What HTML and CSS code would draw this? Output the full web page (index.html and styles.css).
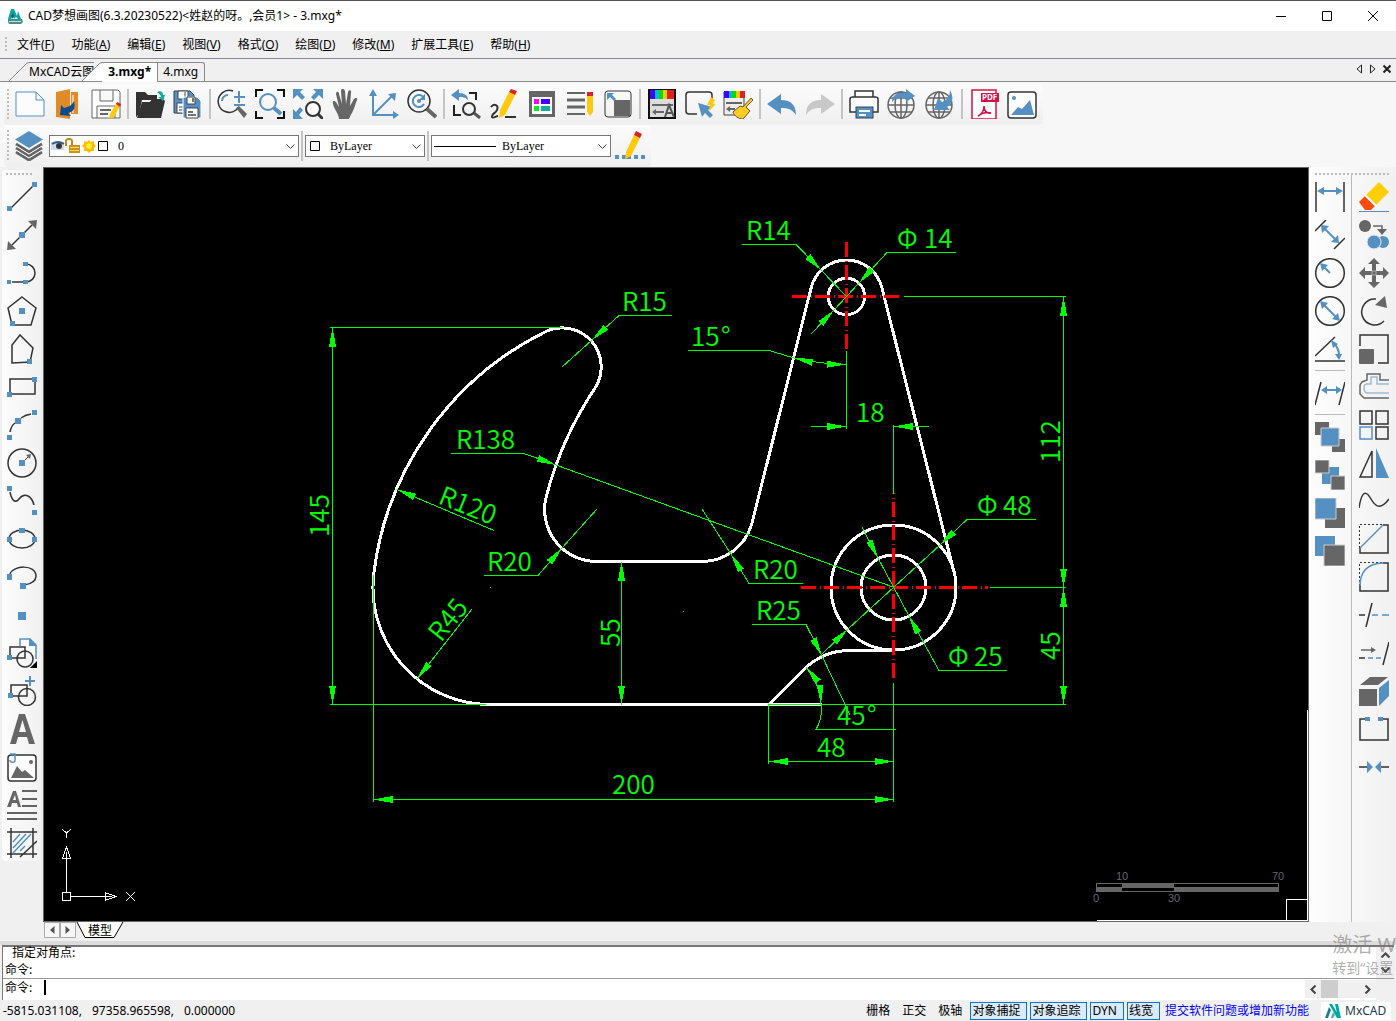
FILE: index.html
```html
<!DOCTYPE html>
<html lang="zh-CN">
<head>
<meta charset="utf-8">
<title>CAD梦想画图</title>
<link rel="stylesheet" href="styles.css">
</head>
<body>
<header class="titlebar">
  <svg class="app-icon" viewBox="0 0 16 16"><path fill="#4a8c8a" d="M1 11h14l1 3-2 2H2l-1-2z"/><path fill="#c9e2e0" d="M2 13h12v1H2z"/><path fill="#00a99d" d="M4 1h3l3 7 1-5 3 8h-3l-2-2-2 2-2-4-1 4H1z"/><path fill="#24566b" d="M4 8l2-3 1 3-2 3z"/></svg>
  <h1 class="title">CAD梦想画图(6.3.20230522)&lt;姓赵的呀。,会员1&gt; - 3.mxg*</h1>
  <div class="win-controls">
    <button aria-label="最小化"><svg viewBox="0 0 10 10"><path d="M0 5.5h10"/></svg></button>
    <button aria-label="最大化"><svg viewBox="0 0 10 10"><path d="M.5.5h9v9h-9z"/></svg></button>
    <button aria-label="关闭"><svg viewBox="0 0 10 10"><path d="M0 0l10 10M10 0L0 10"/></svg></button>
  </div>
</header>
<nav class="menubar">
  <i class="grip"></i>
  <button>文件(<u>F</u>)</button><button>功能(<u>A</u>)</button><button>编辑(<u>E</u>)</button><button>视图(<u>V</u>)</button><button>格式(<u>O</u>)</button><button>绘图(<u>D</u>)</button><button>修改(<u>M</u>)</button><button>扩展工具(<u>E</u>)</button><button>帮助(<u>H</u>)</button>
</nav>
<div class="doctabs">
  <button class="tab first"><svg viewBox="0 0 20 19"><path d="M0 19L16 3Q18 .5 20 .5"/></svg><span>MxCAD云图</span></button>
  <button class="tab active"><svg viewBox="0 0 20 19"><path d="M0 19L16 3Q18 .5 20 .5V19z"/></svg><span>3.mxg*</span></button>
  <button class="tab plain"><span>4.mxg</span></button>
  <div class="tab-nav">
    <button aria-label="向左"><svg viewBox="0 0 8 10"><path d="M6.500 1v8L2 5z"/></svg></button>
    <button aria-label="向右"><svg viewBox="0 0 8 10"><path d="M1.500 1v8L6 5z"/></svg></button>
    <button aria-label="关闭标签"><svg viewBox="0 0 8 10"><path class="x" d="M.5 1.500l7 7M7.500 1.500l-7 7"/></svg></button>
  </div>
</div>
<div class="bands">
  <div class="toolbar main-tools">
    <i class="grip"></i>
    <button class="tool" aria-label="新建"><svg viewBox="0 0 30 30"><path class="sb wf" d="M1 3h20l8 8v16H1zM21 3v8h8"/></svg></button>
    <button class="tool" aria-label="打开"><svg viewBox="0 0 30 30"><path fill="#e08a28" d="M3 3L17 0v30L3 28zM18 3h7v22h-7z"/><path fill="#f7c88c" d="M19 6h2v18h-2z"/><path fill="#0b4a8e" d="M7 26l1-10 3 3c5-1 8-3 10-7 2 8-1 11-6 12l3 3z"/></svg></button>
    <button class="tool" aria-label="保存"><svg viewBox="0 0 30 30"><path class="sg wf" d="M1 1h26l2 2v26H1zM9 1v11h13V1M6 29V17h18v12"/><path class="sg" stroke-width="2" d="M9 21h11M9 25h8"/><path fill="#ffc90e" d="M25 15l4 2-6 11-5 2 1-5z"/><path fill="#d22" d="M25 15l1-2 4 2-1 3z"/></svg></button>
    <i class="sep"></i>
    <button class="tool" aria-label="打开文件"><svg viewBox="0 0 30 30"><path fill="#333" d="M1 3h9l3 3h9v5H7L4 25l-3 3z"/><path fill="#333" d="M7 13h8l2-3h11l2 2-4 17H2z"/><path fill="#1aa89a" d="M22 3c4-2 6 0 6 3h2l-2 6-5-4h3c0-2-2-3-4-5z"/></svg></button>
    <button class="tool" aria-label="全部保存"><svg viewBox="0 0 30 30"><path fill="#5590c3" stroke="#345" d="M1 2h16l4 4v18H1z"/><path fill="#fff" stroke="#444" d="M5 2h10v8H5zM4 14h10v10H4z"/><path stroke="#444" d="M6 18h6M6 21h6M12 3v5"/><path fill="#5590c3" stroke="#fff" d="M10 8h14l4 4v17H10z"/><path fill="#fff" stroke="#444" d="M14 8h8v7h-8zM13 19h12v10H13z"/><path stroke="#444" stroke-width="1.500" d="M15 23h5M15 26h8M20 9v4"/></svg></button>
    <i class="sep"></i>
    <button class="tool" aria-label="缩放"><svg viewBox="0 0 30 30"><path class="sk" stroke-width="1.500" d="M16 2a11 11 0 1 0 3 19l3-3"/><path class="g" d="M19 19l3-2 8 8-3 4z"/><path class="sb" stroke-width="2" d="M5 12a6 6 0 0 1 6-6M17 8h11M22 2v12M17 16h11"/></svg></button>
    <button class="tool" aria-label="窗口缩放"><svg viewBox="0 0 30 30"><path fill="none" stroke="#111" stroke-width="2" d="M1 8V1h7M22 1h7v7M29 22v7h-7M8 29H1v-7"/><circle class="sb" cx="13" cy="13" r="8" stroke-width="2"/><path class="sb" stroke-width="4" d="M19 19l7 6"/></svg></button>
    <button class="tool" aria-label="范围缩放"><svg viewBox="0 0 30 30"><path class="b" d="M0 0h10L7 3l5 5-3 3-5-5-4 4zM30 0H20l3 3-5 5 3 3 5-5 4 4zM0 30V20l3 3 4-5 3 3-4 5 4 4z"/><circle class="sk wf" cx="20" cy="20" r="7" stroke-width="2"/><path stroke="#333" stroke-width="3" d="M25 25l5 5"/></svg></button>
    <button class="tool" aria-label="平移"><svg viewBox="0 0 30 30"><path class="g" d="M8 30c0-5-5-10-6-15-1-3 1-4 3-2l3 5L5 5c0-3 3-3 3 0l3 10L10 2c0-3 3-3 4 0l1 13 2-12c1-3 4-2 3 1l-1 13 4-7c2-2 4-1 3 1-2 5-3 9-5 13-2 3-3 6-3 6z"/></svg></button>
    <button class="tool" aria-label="坐标"><svg viewBox="0 0 30 30"><path class="sb" stroke-width="2" d="M4 4v22h22M4 26L24 6"/><path class="b" d="M0 7l4-7 4 7zM24 22l6 4-6 4zM19 5l8-1-1 8z"/></svg></button>
    <button class="tool" aria-label="实时缩放"><svg viewBox="0 0 30 30"><circle class="sk" cx="12" cy="12" r="11" stroke-width="1.500"/><path stroke="#666" stroke-width="4" d="M20 20l9 8"/><path class="sb" stroke-width="2" d="M17 9a6 6 0 1 0 0 6"/><path class="b" d="M18 5v6h-6z"/><circle class="b" cx="12" cy="12" r="2"/></svg></button>
    <i class="sep"></i>
    <button class="tool" aria-label="上一视图"><svg viewBox="0 0 30 30"><path class="b" d="M0 6l8-6v4c6 0 9 3 9 7-3-3-5-3-9-3v4z"/><path fill="none" stroke="#222" stroke-width="2" d="M18 4h7v7M3 16v10h7"/><circle class="sk" cx="18" cy="20" r="6" stroke-width="2"/><path stroke="#555" stroke-width="3" d="M23 24l6 5"/></svg></button>
    <button class="tool" aria-label="编辑线"><svg viewBox="0 0 30 30"><path class="sk" stroke-width="2" d="M2 18c3-4 8-2 6 3-1 3-6 4-5 7 1 2 4-1 6-1M16 28h11"/><path fill="#ffc90e" d="M20 3l6 3-10 20-6 3 1-8z"/><path fill="#d22" d="M20 3l2-3 6 2-2 4z"/></svg></button>
    <button class="tool" aria-label="特性"><svg viewBox="0 0 30 30"><path class="g" d="M2 2h26v26H2z"/><path fill="#fff" d="M5 8h20v17H5z"/><path fill="#f0f" d="M7 10h5v5H7z"/><path fill="#40f" d="M14 10h9v5h-9z"/><path fill="#0e2" d="M7 17h5v5H7z"/><path fill="#1aa89a" d="M14 17h9v5h-9z"/></svg></button>
    <button class="tool" aria-label="线型"><svg viewBox="0 0 30 30"><path stroke="#666" stroke-width="2" d="M2 4h18M2 25h18"/><path stroke="#666" stroke-width="3" d="M2 11h18M2 18h18"/><path fill="#ffc90e" d="M22 5h6v18l-3 4-3-4z"/><path fill="#d22" d="M22 3h6v4h-6z"/></svg></button>
    <button class="tool" aria-label="比例"><svg viewBox="0 0 30 30"><rect class="sk" x="2" y="2" width="26" height="26" rx="3"/><path class="g" d="M11 11h16v16H11z"/><path class="b" d="M4 4h7l-2 2 4 4-2 2-4-4-3 3z"/></svg></button>
    <i class="sep"></i>
    <button class="tool" aria-label="标注样式"><svg viewBox="0 0 30 30"><path fill="#ddd" stroke="#111" stroke-width="2" d="M2 1h26v28H2z"/><path fill="#40f" d="M3 1h5v9H3z"/><path fill="#0bd" d="M8 1h4v9H8z"/><path fill="#0d0" d="M12 1h4v9h-4z"/><path fill="#ec0" d="M16 1h4v9h-4z"/><path fill="#d22" d="M20 1h7v9h-7z"/><path class="g" d="M5 15h21v2H5zM5 23l4-3v2h8v2H9v2z"/><path fill="none" stroke="#555" stroke-width="2" d="M18 28l4-12 5 12M20 24h6"/></svg></button>
    <button class="tool" aria-label="快速选择"><svg viewBox="0 0 30 30"><path class="sk" stroke-width="1.500" d="M12 25H4q-3 0-3-3V6q0-3 3-3h20q3 0 3 3v4"/><path class="b" d="M13 14l14 4-4 3 5 5-3 3-5-5-3 4z"/><path fill="#ffc90e" d="M26 8l4 3-2 4h3l-7 7 1-6h-3z"/></svg></button>
    <button class="tool" aria-label="特性匹配"><svg viewBox="0 0 30 30"><path fill="#eee" stroke="#444" d="M1 3h20v23H1z"/><path fill="#40f" d="M1 2h5v7H1z"/><path fill="#0bd" d="M6 2h3v7H6z"/><path fill="#0d0" d="M9 2h4v7H9z"/><path fill="#ec0" d="M13 2h4v7h-4z"/><path fill="#d22" d="M17 2h5v7h-5z"/><path class="g" d="M3 13h16v2H3zM3 20l4-3v2h5v2H7v2z"/><path fill="#fc2" stroke="#654" d="M28 9l2 2-7 7 4 4-7 8c-4 0-9-3-10-7l7-6 3 1z"/></svg></button>
    <i class="sep"></i>
    <button class="tool" aria-label="撤销"><svg viewBox="0 0 30 30"><path class="b" d="M0 15L14 5v6c9 0 15 4 15 15-4-6-8-7-15-7v6z"/></svg></button>
    <button class="tool" aria-label="重做"><svg viewBox="0 0 30 30"><path fill="#c8c8c8" d="M30 15L16 5v6C7 11 1 15 1 26c4-6 8-7 15-7v6z"/></svg></button>
    <i class="sep"></i>
    <button class="tool" aria-label="打印"><svg viewBox="0 0 30 30"><path class="sk wf" stroke-width="1.500" d="M6 8V2h18v6M7 23H1V10q0-2 3-2h22q3 0 3 2v13h-6"/><rect fill="#5590c3" stroke="#345" x="7" y="18" width="17" height="11"/><path stroke="#fff" stroke-width="2" d="M10 22h11M10 26h7"/></svg></button>
    <button class="tool" aria-label="上传"><svg viewBox="0 0 30 30"><g class="sg" stroke-width="1.500"><circle cx="14" cy="16" r="13"/><ellipse cx="14" cy="16" rx="6" ry="13"/><path d="M14 3v26M1 16h26M3 9h22M3 23h22"/></g><path class="b" d="M5 13C5 6 11 3 19 4V0l9 7-9 6V9C12 8 8 9 5 13z"/></svg></button>
    <button class="tool" aria-label="下载"><svg viewBox="0 0 30 30"><g class="sg" stroke-width="1.500"><circle cx="14" cy="16" r="13"/><ellipse cx="14" cy="16" rx="6" ry="13"/><path d="M14 3v26M1 16h26M3 9h22M3 23h22"/></g><path class="b" d="M25 1c4 8 3 13-3 17l3 3H9l4-12 4 4c5-2 8-5 8-12z"/></svg></button>
    <i class="sep"></i>
    <button class="tool" aria-label="导出 PDF"><svg viewBox="0 0 30 30"><path fill="#fff" stroke="#d51044" stroke-width="1.500" d="M3 1h24v29H3z"/><path fill="#d51044" d="M12 4h18v9H12z"/><text x="13" y="11" font-size="8" font-weight="700" fill="#fff">PDF</text><path fill="none" stroke="#d51044" stroke-width="1.500" d="M9 27c4-2 6-6 6-10 0 5 3 8 7 7-4-1-9 0-13 3z"/></svg></button>
    <button class="tool" aria-label="导出图片"><svg viewBox="0 0 30 30"><rect class="sk wf" x="1" y="3" width="28" height="26" rx="3" stroke-width="1.500"/><circle class="b" cx="7" cy="9" r="2"/><path class="b" d="M4 26l7-8 4 2 8-9 4 15z"/></svg></button>
  </div>
  <div class="toolbar layer-tools">
    <i class="grip"></i>
    <button class="tool" aria-label="图层"><svg viewBox="0 0 30 30"><path class="b" d="M15 0l14 8.500L15 17 1 8.500z"/><path fill="none" stroke="#666" stroke-width="3" d="M2 13l13 8 13-8M2 17l13 8 13-8M2 21l13 8 13-8"/><path fill="none" stroke="#fafafa" d="M2 15l13 8 13-8M2 19l13 8 13-8"/></svg></button>
    <div class="combo layer">
      <select aria-label="当前图层"><option>0</option></select>
      <svg class="states" viewBox="0 0 58 16"><path fill="#cde" d="M0 4h13v8H0z"/><path fill="none" stroke="#345f8c" stroke-width="2" d="M1 6q6-4 12 0"/><circle cx="8" cy="8" r="3" fill="#333"/><path fill="none" stroke="#b98a1a" stroke-width="2" d="M15 8V3q0-2 3-2t3 2v4"/><path fill="#c9941c" d="M18 7h11v8H18z"/><path stroke="#fd6" d="M19 9.500h9M19 12.500h9"/><path fill="#fb0" d="M38 2l2 2 3-1v3l2 2-2 2v3h-3l-2 2-2-2h-3v-3l-2-2 2-2V3l3 1z"/><circle cx="38" cy="8" r="3" fill="#fe3"/><path fill="#fff" stroke="#000" d="M47.500 3.500h9v9h-9z"/></svg>
      <svg class="chev" viewBox="0 0 9 5"><path d="M.5.5l4 4 4-4"/></svg>
    </div>
    <i class="sep"></i>
    <div class="combo color">
      <select aria-label="颜色"><option>ByLayer</option></select>
      <svg class="states" viewBox="0 0 16 16"><path fill="#fff" stroke="#000" d="M3.500 3.500h9v9h-9z"/></svg>
      <svg class="chev" viewBox="0 0 9 5"><path d="M.5.5l4 4 4-4"/></svg>
    </div>
    <i class="sep"></i>
    <div class="combo linetype">
      <select aria-label="线型选择"><option>ByLayer</option></select>
      <svg class="states" viewBox="0 0 64 16"><path stroke="#000" d="M1 8.500h62"/></svg>
      <svg class="chev" viewBox="0 0 9 5"><path d="M.5.5l4 4 4-4"/></svg>
    </div>
    <button class="tool" aria-label="线型管理"><svg viewBox="0 0 30 30"><path stroke="#5590c3" stroke-width="4" stroke-dasharray="4 3 9 3 4 3 4 2" d="M0 26h30"/><path fill="#ffc90e" d="M19 4l6 3-9 18-6 3 1-7z"/><path fill="#d22" d="M19 4l2-4 6 3-2 4z"/></svg></button>
  </div>
</div>
<main class="workspace">
  <div class="side left">
    <i class="grip-h"></i>
    <button class="tool" aria-label="直线"><svg viewBox="0 0 30 30"><path class="sk" stroke-width="1.500" d="M3 27L27 3"/><path class="b" d="M0 24h5v5H0zM25 0h5v5h-5z"/></svg></button>
    <button class="tool" aria-label="构造线"><svg viewBox="0 0 30 30"><path class="sk" stroke-width="1.500" d="M5 25L25 5"/><path class="g" d="M30 0l-1 9-8-8zM0 30l1-9 8 8z"/><path class="b" d="M12 12h6v6h-6z"/></svg></button>
    <button class="tool" aria-label="多段线"><svg viewBox="0 0 30 30"><path class="sk" stroke-width="1.500" d="M5 24h14a9 9 0 0 0 0-18"/><path class="b" d="M0 22h4v4H0zM16 22h5v4h-5zM16 4h5v4h-5z"/></svg></button>
    <button class="tool" aria-label="正多边形"><svg viewBox="0 0 30 30"><path class="sk" stroke-width="1.500" d="M15 1l14 11-5 17H5L1 12z"/><path class="b" d="M12 12h6v6h-6zM3 25h5v5H3z"/></svg></button>
    <button class="tool" aria-label="多边形"><svg viewBox="0 0 30 30"><path class="sk" stroke-width="1.500" d="M13 1l13 13-3 14-18 1V11z"/><path class="b" d="M20 25h5v5h-5z"/></svg></button>
    <button class="tool" aria-label="矩形"><svg viewBox="0 0 30 30"><path class="sk" stroke-width="1.500" d="M3 7h25v15H3z"/><path class="b" d="M25 5h5v5h-5zM0 20h5v5H0z"/></svg></button>
    <button class="tool" aria-label="圆弧"><svg viewBox="0 0 30 30"><path class="sk" stroke-width="1.500" d="M3 22Q4 16 8 13M14 8Q18 5 24 4"/><path class="b" d="M0 25h5v5H0zM8 8h6v6H8zM25 0h5v5h-5z"/></svg></button>
    <button class="tool" aria-label="圆"><svg viewBox="0 0 30 30"><circle class="sk" cx="15" cy="15" r="14" stroke-width="1.500"/><path class="sk" d="M15 15l6-6"/><path class="g" d="M24 6l-1 5-4-4z"/><path class="b" d="M12 12h6v6h-6z"/></svg></button>
    <button class="tool" aria-label="样条曲线"><svg viewBox="0 0 30 30"><path class="sk" stroke-width="1.500" d="M3 6c2 10 6 11 9 7 6-8 13-2 15 6"/><path class="b" d="M0 0h5v5H0zM25 24h5v5h-5z"/></svg></button>
    <button class="tool" aria-label="椭圆"><svg viewBox="0 0 30 30"><ellipse class="sk" cx="15" cy="15" rx="13" ry="9" stroke-width="1.500"/><path class="b" d="M12 4h6v5h-6zM0 13h5v5H0zM25 13h5v5h-5z"/></svg></button>
    <button class="tool" aria-label="椭圆弧"><svg viewBox="0 0 30 30"><path class="sk" stroke-width="1.500" d="M3 12c3-9 26-10 26 2 0 5-5 8-12 9"/><path class="b" d="M0 12h5v6H0zM13 21h6v6h-6z"/></svg></button>
    <button class="tool" aria-label="点"><svg viewBox="0 0 30 30"><path class="b" d="M11 12h8v8h-8z"/></svg></button>
    <button class="tool" aria-label="插入块"><svg viewBox="0 0 30 30"><path class="sb wf" stroke-width="1.500" d="M13 8V1h10l6 6v14"/><path class="b" d="M22 0l8 8h-8z"/><path class="sk" stroke-width="1.500" d="M3 9h15v11H3z"/><circle class="sk" cx="18" cy="21" r="8" stroke-width="1.500"/><path class="b" d="M0 17h5v5H0z"/><path d="M30 23v7h-7z"/></svg></button>
    <button class="tool" aria-label="创建块"><svg viewBox="0 0 30 30"><path class="sk" stroke-width="1.500" d="M4 9h16v11H4z"/><circle class="sk" cx="20" cy="21" r="8.500" stroke-width="1.500"/><path class="b" d="M1 17h5v5H1z"/><path class="sb" stroke-width="2" d="M23 0v10M18 5h10"/></svg></button>
    <button class="tool" aria-label="单行文字"><svg viewBox="0 0 30 30"><path class="g" fill-rule="evenodd" d="M3 30L12 0h6l10 30h-6l-2-7h-9l-2 7zM12 18h7L15.500 6z"/></svg></button>
    <button class="tool" aria-label="插入图片"><svg viewBox="0 0 30 30"><rect class="sk wf" x="1" y="3" width="28" height="26" rx="3" stroke-width="1.500"/><path class="g" d="M4 26l6-12 5 6 3-2 9 8z"/><circle class="g" cx="24" cy="10" r="2"/><path class="sb" stroke-width="1.500" d="M3 2h5v6c0 3-5 3-5 0"/></svg></button>
    <button class="tool" aria-label="多行文字"><svg viewBox="0 0 30 30"><path class="g" fill-rule="evenodd" d="M0 17L6 1h3l5 16h-3l-1-4H5l-1 4zM6 10h3L8 5z"/><path class="sk" stroke-width="1.500" d="M15 1h15M15 9h15M15 16h15M0 23h30M0 29h30"/></svg></button>
    <button class="tool" aria-label="填充"><svg viewBox="0 0 30 30"><path class="sk" stroke-width="1.500" d="M0 4h30M0 26h30M4 0v30M26 0v30M13 29l17-16"/><path class="sb" stroke-width="1.500" d="M6 14l7-8M6 20L19 6M6 25L24 6M13 23l5-5"/></svg></button>
  </div>
  <section class="canvas">
  <svg class="drawing" viewBox="44 168 1264 753" shape-rendering="crispEdges">
    <defs><marker id="arrow" markerUnits="userSpaceOnUse" markerWidth="40" markerHeight="16" viewBox="-20 -8 40 16" refX="0" refY="0" orient="auto-start-reverse"><path fill="#0f0" d="M0 0L-19-3.500v7z"/></marker></defs>
    <g class="outline">
      <path d="M822 704.500H490.500A117 117 0 0 1 373.900 573A312 312 0 0 1 545.300 331.800A39 39 0 0 1 594.900 388.200A359 359 0 0 0 546.400 496A52 52 0 0 0 597 561.500H702A52 52 0 0 0 751.500 525L811.200 287.700A36.400 36.400 0 0 1 881.800 287.500L954 572.200"/>
      <circle cx="846.500" cy="296.500" r="18.200"/><circle cx="893.500" cy="587.500" r="62.500"/><circle cx="893.500" cy="587.500" r="32.500"/>
      <path d="M769 704.500L804 669.500A65 65 0 0 1 850 650.500H893.500"/>
    </g>
    <g class="center">
      <path d="M792 296.500H901M846.500 242V351M801 587.500H988"/><path stroke-dashoffset="14" d="M893.500 493V682"/>
    </g>
    <g class="dim">
      <path class="both" d="M332.500 327.500V704.500"/><path class="both" d="M373.500 799.500H893.500"/><path class="both" d="M621.500 561.500V704.500"/><path class="both" d="M1063.500 296.500V587.500"/><path class="both" d="M1063.500 587.500V704.500"/><path class="both" d="M769 761.500H893.500"/>
      <path d="M330 327.500H562M330 704.500H486M373.500 575V802M893.500 683V802M904 296.500H1066M990 587.500H1066M769 704.500H1066M768.500 704V764M846.500 351V429M893.500 425V494"/>
      <path class="to" d="M672 315.500H619L592 340"/><path d="M592 340L562 367"/>
      <path class="to" d="M451 453.500H524L556 465"/><path d="M556 465L893 587"/>
      <path class="from" d="M397 489.500L494 530.500"/><path class="from" d="M417 679L472 609"/>
      <path class="to" d="M484 575.500H538L562 548"/><path d="M562 548L597 509"/>
      <path class="to" d="M742 244.500H796L821 270"/><path d="M821 270L846 296"/>
      <path class="to" d="M956 252.500H887L859 283"/><path class="to" d="M811 334L834 310"/><path d="M834 310L859 283"/>
      <path d="M688 350.500H769L794 358"/><path class="both" d="M794 358Q820 364 846 364.500"/>
      <path class="to" d="M811 426.500H846"/><path class="to" d="M929 426.500H894"/>
      <path class="to" d="M1036 519.500H967L940 545"/><path class="to" d="M820 656L848 629"/><path d="M848 629L940 545"/>
      <path class="to" d="M1007 670.500H939L909 616"/><path class="to" d="M862 527L878 558"/><path d="M878 558L909 616"/>
      <path class="to" d="M803 583.500H749L731 554"/><path d="M731 554L702 509"/>
      <path class="to" d="M752 624.500H806L822 656"/><path d="M822 656L850 715"/>
      <path class="both" d="M806 667Q820 684 821 704"/><path d="M821 704Q823 718 816 729.500H896"/>
    </g>
    <g class="dimtext">
      <text x="622" y="311">R15</text><text x="456" y="449">R138</text><text x="487" y="571">R20</text><text x="746" y="240">R14</text><text x="753" y="579">R20</text><text x="756" y="620">R25</text>
      <text x="897" y="248">Φ<tspan x="924">14</tspan></text><text x="977" y="515">Φ<tspan x="1003">48</tspan></text><text x="948" y="666">Φ<tspan x="974">25</tspan></text>
      <text x="691" y="346">15<tspan x="721">°</tspan></text><text x="837" y="725">45<tspan x="867">°</tspan></text>
      <text x="856" y="422">18</text><text x="817" y="757">48</text><text x="612" y="794">200</text>
      <text transform="translate(329 537) rotate(-90)">145</text><text transform="translate(620 647) rotate(-90)">55</text><text transform="translate(1060 463) rotate(-90)">112</text><text transform="translate(1060 660) rotate(-90)">45</text>
      <text transform="translate(437 503) rotate(22)">R120</text><text transform="translate(441 643) rotate(-51)">R45</text>
    </g>
    <path fill="#0f0" d="M490 587h1v1h-1zM683 611h1v1h-1z"/>
    <g class="ucs"><path d="M62.500 892.500h8v8h-8zM66.500 892V858M71 896.500H105M66.500 847l-4 11h8zM66.500 852v6M116 896.500l-11-4v8zM105 896.500h7M62 829l4.500 4 4.500-4M66.500 833v5M126 892l9 9M135 892l-9 9M1097 920.500H1308M1307.500 710V921M1286.500 921V899.500H1308"/></g>
    <g class="scalebar"><path fill="#666" d="M1096 883h183v9h-183z"/><path fill="#000" d="M1097 884h25v3h-25zM1122 888h52v3h-52zM1174 884h104v3h-104z"/><text x="1122" y="880">10</text><text x="1278" y="880">70</text><text x="1096" y="902">0</text><text x="1174" y="902">30</text></g>
  </svg>
  </section>
  <div class="side right">
    <i class="grip-h"></i>
    <div class="columns">
    <div class="column">
      <button class="tool" aria-label="线性标注"><svg viewBox="0 0 30 30"><path class="sk" stroke-width="1.500" d="M1 0v30M29 0v30"/><path class="sb" stroke-width="2" d="M6 9h18"/><path class="b" d="M2 9l7-4v8zM28 9l-7-4v8z"/></svg></button>
      <button class="tool" aria-label="对齐标注"><svg viewBox="0 0 30 30"><path class="sk" stroke-width="1.500" d="M0 11L11 0M19 29l11-11"/><path class="sb" stroke-width="2" d="M9 8l12 12"/><path class="b" d="M6 5l8 1-7 7zM24 23l-8-1 7-7z"/></svg></button>
      <button class="tool" aria-label="半径标注"><svg viewBox="0 0 30 30"><circle class="sk" cx="15" cy="15" r="14.300" stroke-width="1.500"/><path class="sb" stroke-width="2" d="M9 9l6 6"/><path class="b" d="M5 5l8 2-6 6z"/></svg></button>
      <button class="tool" aria-label="直径标注"><svg viewBox="0 0 30 30"><circle class="sk" cx="15" cy="15" r="14.300" stroke-width="1.500"/><path class="sb" stroke-width="2" d="M9 9l12 12"/><path class="b" d="M5 5l8 2-6 6zM25 25l-8-2 6-6z"/></svg></button>
      <button class="tool" aria-label="角度标注"><svg viewBox="0 0 30 30"><path class="sk" stroke-width="1.500" d="M0 22L20 3M0 27h30"/><path class="sb" stroke-width="2" d="M19 9q5 6 5 12"/><path class="b" d="M16 6l7 4-5 4zM24 26l-4-6h7z"/></svg></button>
      <i class="rule"></i>
      <button class="tool" aria-label="标注编辑"><svg viewBox="0 0 30 30"><path class="sk" stroke-width="1.500" d="M6 4L0 27M30 4l-6 23"/><path class="sb" stroke-width="2" d="M9 12h15"/><path class="b" d="M6 12l6-4v8zM27 12l-6-4v8z"/></svg></button>
      <i class="rule"></i>
      <button class="tool" aria-label="前置"><svg viewBox="0 0 30 30"><path class="g" d="M0 0h14v13H0zM17 17h13v13H17z"/><path class="b" stroke="#ccc" d="M6 6h18v18H6z"/></svg></button>
      <button class="tool" aria-label="后置"><svg viewBox="0 0 30 30"><path class="b" d="M7 7h17v17H7z"/><path class="g" stroke="#ccc" d="M0 0h14v13H0zM16 16h14v14H16z"/></svg></button>
      <button class="tool" aria-label="置于对象之上"><svg viewBox="0 0 30 30"><path class="g" d="M10 10h20v20H10z"/><path class="b" stroke="#ccc" d="M0 0h21v21H0z"/></svg></button>
      <button class="tool" aria-label="置于对象之下"><svg viewBox="0 0 30 30"><path class="b" d="M0 0h20v20H0z"/><path class="g" stroke="#ccc" d="M9 9h21v21H9z"/></svg></button>
    </div>
    <div class="column">
      <button class="tool" aria-label="删除"><svg viewBox="0 0 30 30"><path fill="#ffce0a" d="M20 0l10 10-13 13L7 13z"/><path fill="#ff4a0a" d="M6 14l10 10-4 4H6l-6-8z"/><path stroke="#fff" stroke-width="2" d="M6 13l11 11"/><path stroke="#5590c3" d="M0 29.500h30"/></svg></button>
      <button class="tool" aria-label="复制"><svg viewBox="0 0 30 30"><circle class="g" cx="6" cy="6" r="6"/><path class="sg" stroke-width="1.500" d="M14 6h9v5"/><path class="g" d="M18 9h10l-5 6z"/><circle class="b" cx="24" cy="22" r="6"/><circle class="b" cx="15" cy="22" r="7" stroke="#eee"/></svg></button>
      <button class="tool" aria-label="移动"><svg viewBox="0 0 30 30"><path class="g" d="M15 0l6 6h-4v7h7V9l6 6-6 6v-4h-7v7h4l-6 6-6-6h4v-7H6v4l-6-6 6-6v4h7V6H9z"/><path fill="none" stroke="#aaa" d="M13 13h4v4h-4z"/></svg></button>
      <button class="tool" aria-label="旋转"><svg viewBox="0 0 30 30"><path class="sk" stroke-width="1.500" d="M17 3A13 13 0 1 0 25 25"/><path class="g" d="M16 9l10-9 2 12z"/></svg></button>
      <button class="tool" aria-label="缩放对象"><svg viewBox="0 0 30 30"><path class="sk" stroke-width="1.500" d="M1 12V1h28v28H19"/><rect class="g" x="0" y="15" width="15" height="15" rx="1"/></svg></button>
      <button class="tool" aria-label="偏移"><svg viewBox="0 0 30 30"><path class="sg" stroke-width="1.500" d="M30 8h-9V2H8v6L3 10q-2 2-2 4v8l4 4h25"/><path fill="none" stroke="#9bbdd8" stroke-width="1.500" d="M30 12H18V5h-6v7H8q-3 0-3 4t3 5h22"/></svg></button>
      <button class="tool" aria-label="阵列"><svg viewBox="0 0 30 30"><path class="sk" stroke-width="1.500" d="M1 1h12v13H1zM17 1h12v13H17zM17 17h12v12H17z"/><path class="sb" stroke-width="1.500" d="M1 17h12v12H1z"/></svg></button>
      <button class="tool" aria-label="镜像"><svg viewBox="0 0 30 30"><path class="sk" stroke-width="1.500" d="M1 29L13 3v26z"/><path class="b" d="M17 0l13 30H17z"/></svg></button>
      <button class="tool" aria-label="曲线编辑"><svg viewBox="0 0 30 30"><path class="sk" stroke-width="1.500" d="M0 22C3 2 8 6 12 13s9 12 18 0"/></svg></button>
      <button class="tool" aria-label="倒角"><svg viewBox="0 0 30 30"><path class="sk" stroke-dasharray="2 2" d="M.5 24V.5H24"/><path class="sk" stroke-width="1.500" d="M1 23v6h28V1h-5"/><path class="sb" stroke-width="1.500" d="M1 24L24 1"/></svg></button>
      <button class="tool" aria-label="圆角"><svg viewBox="0 0 30 30"><path class="sk" stroke-dasharray="2 2" d="M.5 24V.5H24"/><path class="sk" stroke-width="1.500" d="M1 23v6h28V1h-5"/><path class="sb" stroke-width="1.500" d="M1 24Q1 2 24 1"/></svg></button>
      <button class="tool" aria-label="修剪"><svg viewBox="0 0 30 30"><path class="sk" stroke-width="1.500" d="M0 15h6M13 3L7 27"/><path class="sb" stroke-width="1.500" d="M13 15h6M23 15h7"/></svg></button>
      <button class="tool" aria-label="延伸"><svg viewBox="0 0 30 30"><path class="sk" stroke-width="1.500" d="M0 20h6M30 4l-6 23"/><path class="sb" stroke-width="1.500" d="M9 20h5M17 20h5"/><path class="sg" stroke-width="1.500" d="M2 12h11"/><path class="g" d="M12 9l5 3-5 3z"/></svg></button>
      <button class="tool" aria-label="分解"><svg viewBox="0 0 30 30"><path class="g" d="M0 13h18v17H0zM1 9l10-8h18L19 9z"/><path class="b" d="M20 12l10-8v16L20 30z"/></svg></button>
      <button class="tool" aria-label="打断"><svg viewBox="0 0 30 30"><path class="sk" stroke-width="1.500" d="M6 5H1v21h28V5h-5"/><path class="b" d="M6 3h5v4H6zM19 3h5v4h-5z"/></svg></button>
      <button class="tool" aria-label="合并"><svg viewBox="0 0 30 30"><path class="sk" stroke-width="1.500" d="M0 15h9M21 15h9"/><path class="b" d="M8 9l6 6-6 6zM22 9l-6 6 6 6z"/></svg></button>
    </div>
    </div>
  </div>
</main>
<div class="modelbar">
  <button class="step" aria-label="上一布局"><svg viewBox="0 0 8 10"><path d="M6.500 1v8L2 5z"/></svg></button><button class="step" aria-label="下一布局"><svg viewBox="0 0 8 10"><path d="M1.500 1v8L6 5z"/></svg></button>
  <button class="model"><svg viewBox="0 0 48 16"><path d="M1 0l8 15.500h29L47 0"/></svg><span>模型</span></button>
</div>
<section class="command">
  <div class="history">
    <div class="lines"><p class="indent">指定对角点:</p><p>命令:</p></div>
    <div class="vscroll"><button aria-label="向上滚动"><svg class="chev" viewBox="0 0 9 6"><path d="M.5 5.500l4-4 4 4"/></svg></button><button aria-label="向下滚动"><svg class="chev" viewBox="0 0 9 6"><path d="M.5.5l4 4 4-4"/></svg></button></div>
  </div>
  <div class="prompt">
    <label for="cmd">命令:</label><span class="caret"></span><input id="cmd" type="text">
    <div class="hscroll"><button aria-label="向左滚动"><svg class="chev" viewBox="0 0 6 9"><path d="M5.500.5l-4 4 4 4"/></svg></button><i class="thumb"></i><button aria-label="向右滚动"><svg class="chev" viewBox="0 0 6 9"><path d="M.5.5l4 4-4 4"/></svg></button></div>
  </div>
</section>
<footer class="status">
  <output class="coords"><span>-5815.031108,</span><span>97358.965598,</span><span>0.000000</span></output>
  <div class="modes">
    <button>栅格</button><button>正交</button><button>极轴</button><button class="on">对象捕捉</button><button class="on">对象追踪</button><button class="on">DYN</button><button class="on">线宽</button>
    <a href="#feedback">提交软件问题或增加新功能</a>
  </div>
  <div class="brand"><svg viewBox="0 0 16 14"><path fill="#00a99d" d="M4 0h3l8 14h-3zM10 0h3l3 14h-3z"/><path fill="#247a8c" d="M4 3l2 3-3 8H0z"/><path fill="#4aa" d="M8 8l2 3-2 3H6z"/></svg><span>MxCAD</span></div>
</footer>
<aside class="watermark"><p class="big">激活 W</p><p>转到“设置</p></aside>
</body>
</html>
```
FILE: styles.css
```css
* { box-sizing: border-box; }
body {
  margin: 0;
  height: 100vh;
  display: flex;
  flex-direction: column;
  position: relative;
  overflow: hidden;
  background: #f0f0f0;
  color: #000;
  font: 12px/16px "Noto Sans", "Noto Sans CJK SC", sans-serif;
}
button {
  margin: 0;
  padding: 0;
  border: 0;
  background: none;
  font: inherit;
  color: inherit;
  white-space: nowrap;
}
p, h1 { margin: 0; font-size: 12px; font-weight: 400; }
svg { display: block; }
i { display: block; flex: none; }

.titlebar {
  height: 31px;
  display: flex;
  align-items: center;
  padding-left: 7px;
  background: #fff;
  border-top: 1px solid #555;
}
.app-icon { width: 16px; height: 16px; margin-right: 5px; }
.title { flex: 1; }
.win-controls { display: flex; }
.win-controls button { width: 46px; height: 28px; display: grid; place-items: center; }
.win-controls svg { width: 10px; height: 10px; fill: none; stroke: #000; }

.menubar {
  height: 28px;
  display: flex;
  align-items: center;
  gap: 17px;
  padding-left: 5px;
  border-bottom: 1px solid #8a8a98;
}
.grip { width: 2px; align-self: stretch; margin: 6px 0; background: repeating-linear-gradient(#bbb 0 2px, transparent 2px 4px); }
.menubar .grip { margin-right: -7px; }

.doctabs {
  height: 23px;
  display: flex;
  align-items: flex-end;
  padding-left: 9px;
  border-bottom: 1px solid #8a8a8a;
}
.tab { display: flex; height: 19px; line-height: 18px; }
.tab svg { width: 20px; height: 19px; fill: none; stroke: #8a8a8a; }
.tab span { border-top: 1px solid #8a8a8a; }
.tab.active { margin: 0 0 -1px -12px; height: 20px; font-weight: 700; }
.tab.active svg { fill: #fff; }
.tab.active svg path { stroke-dasharray: 28 40; }
.tab.active span { background: #fff; padding: 0 6px; border-right: 1px solid #8a8a8a; }
.tab.plain span { padding: 0 6px 0 5px; border-right: 1px solid #8a8a8a; border-radius: 0 3px 0 0; }
.tab-nav { margin: 0 5px 7px auto; display: flex; gap: 6px; }
.tab-nav svg { width: 8px; height: 10px; fill: none; stroke: #222; }
.tab-nav .x { stroke-width: 2; }

.bands { padding: 2px 0 0 4px; background: #f7f7f7; }
.toolbar {
  display: flex;
  align-items: center;
  width: max-content;
  background: linear-gradient(#fcfcfc, #efefef);
  border-radius: 4px;
}
.main-tools { height: 41px; padding: 0 2px 1px 3px; }
.layer-tools { height: 42px; padding: 0 2px 0 3px; }
.toolbar .grip { margin: 5px 2px 5px 0; }
.layer-tools .grip { margin-right: 1px; }
.tool { width: 30px; height: 30px; flex: none; }
.tool svg { width: 30px; height: 30px; }
.toolbar .tool { margin: 0 4px; }
.sep { width: 2px; height: 30px; margin: 0 2px; background: #c4c4c4; }

.sk { fill: none; stroke: #333; }
.sg { fill: none; stroke: #666; }
.sb { fill: none; stroke: #5590c3; }
.b { fill: #5590c3; }
.g { fill: #666; }
.wf { fill: #fcfcfc; }

.combo { position: relative; }
.combo select {
  width: 100%;
  height: 22px;
  appearance: none;
  border: 1px solid #777;
  border-radius: 0;
  background: #fff;
  color: #000;
  font: 12px/16px "Liberation Serif", serif;
}
.layer { width: 250px; margin-left: 1px; }
.color { width: 120px; }
.linetype { width: 180px; }
.layer select { padding-left: 68px; }
.color select { padding-left: 24px; }
.linetype select { padding-left: 70px; }
.states { position: absolute; left: 2px; top: 3px; height: 16px; pointer-events: none; }
.combo .chev { position: absolute; right: 4px; top: 9px; width: 9px; height: 5px; pointer-events: none; }
.chev { fill: none; stroke: #444; }

.workspace { flex: 1; min-height: 0; display: flex; }
.side { background: linear-gradient(90deg, #fdfdfd, #f1f1f1); border-radius: 4px; }
.grip-h { height: 2px; background: repeating-linear-gradient(90deg, #bbb 0 2px, transparent 2px 4px); }
.left {
  width: 38px;
  margin: 3px 1px 0 2px;
  padding: 3px 3px 3px 5px;
  display: flex;
  flex-direction: column;
  gap: 8px;
  align-self: flex-start;
}
.left .grip-h { margin: 0 3px -1px -1px; }
.canvas {
  flex: 1;
  min-width: 0;
  display: flex;
  background: #000;
  border: 1px solid #666;
  margin-left: 2px;
}
.drawing { flex: 1; min-width: 0; width: 100%; height: 100%; }
.right { width: 87px; padding: 6px 0 0 6px; }
.right .grip-h { margin-right: 6px; }
.columns { display: flex; height: calc(100% - 2px); }
.column { display: flex; flex-direction: column; gap: 8px; padding: 7px 6px 0 0; }
.column + .column { padding-left: 7px; border-left: 1px solid #bbb; }
.column .rule { height: 1px; margin: -2px 0 -1px; background: #bbb; }

.outline { fill: none; stroke: #fff; stroke-width: 3; }
.center { fill: none; stroke: #f00; stroke-width: 3; stroke-dasharray: 15 4 1 3; }
.dim { fill: none; stroke: #0f0; stroke-width: 1; }
.both { marker-start: url(#arrow); marker-end: url(#arrow); }
.to { marker-end: url(#arrow); }
.from { marker-start: url(#arrow); }
.dimtext { fill: #0f0; font-family: "Noto Sans CJK SC", sans-serif; font-size: 26px; font-weight: 350; }
.ucs { fill: none; stroke: #fff; }
.scalebar text { fill: #646478; font: 11px "Liberation Sans", sans-serif; text-anchor: middle; }

.modelbar { height: 19px; display: flex; padding-left: 44px; }
.step { width: 16px; height: 16px; display: grid; place-items: center; border: 1px solid #aaa; background: #f6f6f6; }
.step svg { width: 8px; height: 10px; fill: #555; }
.model { position: relative; width: 48px; height: 17px; line-height: 16px; }
.model svg { position: absolute; inset: 0; width: 48px; height: 16px; fill: #fff; stroke: #000; }
.model span { position: relative; }

.command { border-top: 4px solid #dcdcdc; padding: 0 2px; font-family: "Noto Sans CJK SC", sans-serif; }
.history { display: flex; height: 33px; background: #fff; border-top: 2px solid #777; border-left: 1px solid #777; }
.lines { flex: 1; margin-top: -4px; padding: 0 2px; line-height: 17px; }
.lines .indent { padding-left: 7px; }
.vscroll { width: 18px; background: #f0f0f0; display: flex; flex-direction: column; }
.vscroll button { flex: 1; display: grid; place-items: center; }
.vscroll .chev { width: 9px; height: 6px; stroke-width: 2; }
.prompt { display: flex; height: 22px; background: #fff; border-top: 1px solid #999; border-left: 1px solid #777; padding-left: 2px; line-height: 16px; }
.caret { width: 2px; height: 15px; margin: 1px 0 0 12px; background: #000; }
.prompt input { flex: 1; min-width: 0; border: 0; outline: 0; background: none; font: inherit; }
.hscroll { width: 71px; height: 18px; margin: 1px 0 0 auto; display: flex; background: #f0f0f0; align-items: stretch; }
.hscroll button { width: 16px; display: grid; place-items: center; }
.thumb { width: 17px; background: #cdcdcd; }
.hscroll .thumb + button { margin-left: auto; }
.hscroll .chev { width: 6px; height: 9px; stroke-width: 2; }
.prompt::after { content: ""; width: 18px; background: #f0f0f0; }

.status { height: 21px; display: flex; align-items: center; padding: 0 5px 0 3px; }
.coords { flex: 1; display: flex; gap: 10px; white-space: nowrap; }
.modes { display: flex; gap: 3px; align-items: center; }
.modes button { height: 18px; padding: 0 4px; margin-right: 1px; line-height: 16px; }
.modes .on { padding: 0 6px 0 1px; margin: 0; border: 1px solid #0078d7; background: #dcebf7; }
.modes a { color: #00f; text-decoration: none; margin: 0 12px 0 2px; white-space: nowrap; }
.brand { width: 70px; height: 18px; display: flex; align-items: center; gap: 4px; padding-left: 4px; background: #fff; color: #1b3a4b; }
.brand svg { width: 16px; height: 14px; }

.watermark {
  position: absolute;
  right: 0;
  bottom: 42px;
  white-space: nowrap;
  color: rgba(120, 120, 120, .6);
  pointer-events: none;
}
.watermark p { font-size: 14px; line-height: 22px; }
.watermark .big { font-size: 20px; line-height: 24px; }
```
